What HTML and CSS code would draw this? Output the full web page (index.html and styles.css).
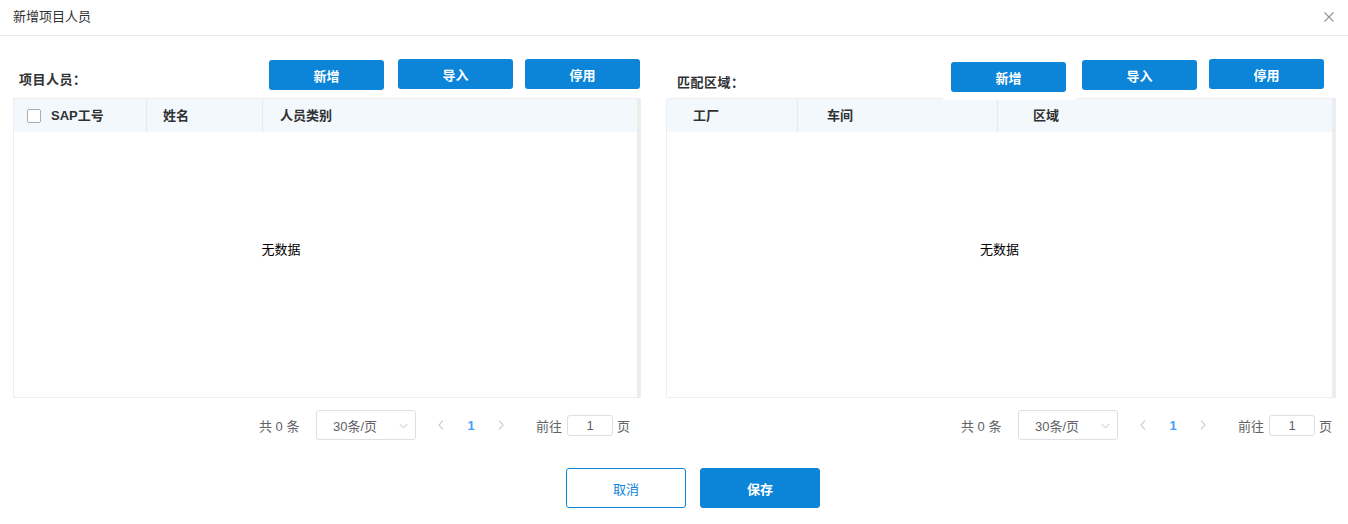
FILE: index.html
```html
<!DOCTYPE html>
<html lang="zh">
<head>
<meta charset="utf-8">
<link rel="stylesheet" href="styles.css">
</head>
<body>
<div class="dialog">
  <div class="dialog-header">
    <span class="dialog-title">新增项目人员</span>
    <span class="close">
      <svg width="10" height="10" viewBox="0 0 10 10"><path d="M0.5 0.5L9.5 9.5M9.5 0.5L0.5 9.5" stroke="#909399" stroke-width="1.1" fill="none"/></svg>
    </span>
  </div>
  <div class="dialog-body">
    <section class="panel panel-left">
      <div class="toolbar">
        <span class="label">项目人员<span class="colon">：</span></span>
        <button class="btn btn-add">新增</button>
        <button class="btn btn-import">导入</button>
        <button class="btn btn-stop">停用</button>
      </div>
      <div class="table">
        <div class="thead">
          <div class="th th-sap"><span class="checkbox"></span>SAP工号</div>
          <div class="th th-name">姓名</div>
          <div class="th th-type">人员类别</div>
        </div>
        <div class="tbody">
          <div class="empty">无数据</div>
        </div>
        <div class="gutter"></div>
      </div>
      <div class="pager">
        <span class="total">共 0 条</span>
        <span class="select">30条/页<svg class="caret" width="9" height="6" viewBox="0 0 9 6"><path d="M0.5 0.8L4.5 4.8L8.5 0.8" stroke="#c0c4cc" stroke-width="1" fill="none"/></svg></span>
        <span class="nav nav-prev"><svg width="6" height="10" viewBox="0 0 6 10"><path d="M5 0.5L1 5L5 9.5" stroke="#c0c4cc" stroke-width="1.1" fill="none"/></svg></span>
        <span class="page">1</span>
        <span class="nav"><svg width="6" height="10" viewBox="0 0 6 10"><path d="M1 0.5L5 5L1 9.5" stroke="#c0c4cc" stroke-width="1.1" fill="none"/></svg></span>
        <span class="goto">前往</span>
        <span class="page-input">1</span>
        <span class="page-unit">页</span>
      </div>
    </section>
    <section class="panel panel-right">
      <div class="toolbar">
        <span class="label">匹配区域<span class="colon">：</span></span>
        <span class="btn-wrap"><button class="btn">新增</button></span>
        <button class="btn btn-import">导入</button>
        <button class="btn btn-stop">停用</button>
      </div>
      <div class="table">
        <div class="thead">
          <div class="th th-factory">工厂</div>
          <div class="th th-shop">车间</div>
          <div class="th th-area">区域</div>
        </div>
        <div class="tbody">
          <div class="empty">无数据</div>
        </div>
        <div class="gutter"></div>
      </div>
      <div class="pager">
        <span class="total">共 0 条</span>
        <span class="select">30条/页<svg class="caret" width="9" height="6" viewBox="0 0 9 6"><path d="M0.5 0.8L4.5 4.8L8.5 0.8" stroke="#c0c4cc" stroke-width="1" fill="none"/></svg></span>
        <span class="nav nav-prev"><svg width="6" height="10" viewBox="0 0 6 10"><path d="M5 0.5L1 5L5 9.5" stroke="#c0c4cc" stroke-width="1.1" fill="none"/></svg></span>
        <span class="page">1</span>
        <span class="nav"><svg width="6" height="10" viewBox="0 0 6 10"><path d="M1 0.5L5 5L1 9.5" stroke="#c0c4cc" stroke-width="1.1" fill="none"/></svg></span>
        <span class="goto">前往</span>
        <span class="page-input">1</span>
        <span class="page-unit">页</span>
      </div>
    </section>
  </div>
  <div class="dialog-footer">
    <button class="fbtn fbtn-cancel">取消</button>
    <button class="fbtn fbtn-save">保存</button>
  </div>
</div>
</body>
</html>
```
FILE: styles.css
```css
* { box-sizing: border-box; }
html, body { margin: 0; padding: 0; background: #fff; }
body {
  font-family: "Liberation Sans", "Noto Sans CJK SC", sans-serif;
  font-size: 13px;
  color: #303133;
}
.dialog { width: 1348px; height: 524px; }
.dialog-header {
  height: 36px;
  border-bottom: 1px solid #e8eaec;
  display: flex;
  align-items: center;
  justify-content: space-between;
  padding: 0 14px 1px 13px;
}
.dialog-title { font-size: 13px; color: #303133; line-height: 18px; }
.close { display: flex; width: 10px; height: 10px; }

.dialog-body { display: flex; padding: 0 12px 0 13px; gap: 25px; }
.panel { display: flex; flex-direction: column; }
.panel-left { width: 628px; }
.panel-right { width: 670px; }

.toolbar { height: 62px; display: flex; align-items: flex-start; }
.label { margin-top: 34px; line-height: 18px; font-weight: bold; color: #303133; letter-spacing: 0.5px; }
.colon { font-family: "Noto Sans CJK TC", sans-serif; }
.panel-left .label { margin-left: 6px; }
.panel-right .label { margin-left: 11px; margin-top: 37px; }

.btn {
  width: 115px; height: 30px;
  border: none; border-radius: 3px;
  background: #0c84d7; color: #fff;
  font-family: inherit; font-size: 13px; font-weight: bold;
  padding: 0;
}
.panel-left .btn-add { margin-left: auto; margin-top: 24px; }
.panel-left .btn-import { margin-left: 14px; margin-top: 23px; }
.panel-left .btn-stop { margin-left: 12px; margin-top: 23px; margin-right: 1px; }

.btn-wrap {
  margin-left: auto;
  margin-top: 26px;
  padding: 0 10px 8px 8px;
  background: #fff;
  position: relative;
  z-index: 1;
  display: flex;
}
.panel-right .btn-import { margin-left: 6px; margin-top: 24px; }
.panel-right .btn-stop { margin-left: 12px; margin-top: 23px; margin-right: 12px; }

.table {
  position: relative;
  height: 300px;
  border: 1px solid #ebeef5;
  display: flex;
  flex-direction: column;
  padding-right: 3px;
}
.gutter {
  position: absolute; top: 0; right: 0; bottom: 0; width: 3px;
  background: #eceeee;
}
.thead { height: 33px; background: #f3f8fc; display: flex; }
.th {
  font-weight: bold; color: #303133; line-height: 33px;
  border-right: 1px solid #e6ebf0;
  display: flex; align-items: center;
}
.th:last-child { border-right: none; flex: 1; }
.th-sap { width: 133px; padding-left: 13px; }
.th-name { width: 116px; padding-left: 16px; }
.th-type { padding-left: 17px; }
.th-factory { width: 131px; padding-left: 26px; }
.th-shop { width: 200px; padding-left: 29px; }
.th-area { padding-left: 35px; }
.checkbox {
  width: 14px; height: 14px;
  border: 1px solid #a8adb5; border-radius: 2px;
  background: #fff; margin-right: 10px;
}
.tbody { flex: 1; display: flex; align-items: center; padding-bottom: 30px; }
.empty { text-align: center; color: #000; font-size: 13px; line-height: 18px; }
.panel-left .empty { width: 534px; }
.panel-right .empty { flex: 1; }

.pager {
  margin-top: 12px; height: 30px;
  display: flex; align-items: center; justify-content: flex-end;
  color: #606266; font-size: 13px;
}
.panel-left .pager { padding-right: 11px; }
.panel-right .pager { padding-right: 4px; }
.total { width: 42px; margin-right: 15px; white-space: nowrap; }
.select {
  width: 100px; height: 30px;
  border: 1px solid #dcdfe6; border-radius: 3px;
  display: flex; align-items: center;
  padding-left: 16px; position: relative;
  color: #606266;
}
.caret { position: absolute; right: 7px; top: 12px; }
.nav { width: 30px; display: flex; justify-content: center; align-items: center; height: 30px; }
.nav-prev { margin-left: 10px; }
.page { width: 30px; text-align: center; color: #409eff; font-weight: bold; font-size: 13px; }
.goto { margin-left: 20px; width: 26px; }
.page-input {
  margin-left: 5px; width: 46px; height: 21px;
  border: 1px solid #dcdfe6; border-radius: 3px;
  text-align: center; line-height: 19px; color: #606266;
}
.page-unit { margin-left: 4px; width: 13px; }

.dialog-footer {
  margin-top: 28px;
  display: flex; justify-content: center; gap: 14px;
  padding-left: 38px;
}
.fbtn {
  width: 120px; height: 40px; border-radius: 3px;
  font-family: inherit; font-size: 13px; padding: 0;
}
.fbtn-cancel { background: #fff; color: #0c84d7; border: 1px solid #0c84d7; }
.fbtn-save { background: #0c84d7; color: #fff; border: 1px solid #0c84d7; font-weight: bold; }
```
